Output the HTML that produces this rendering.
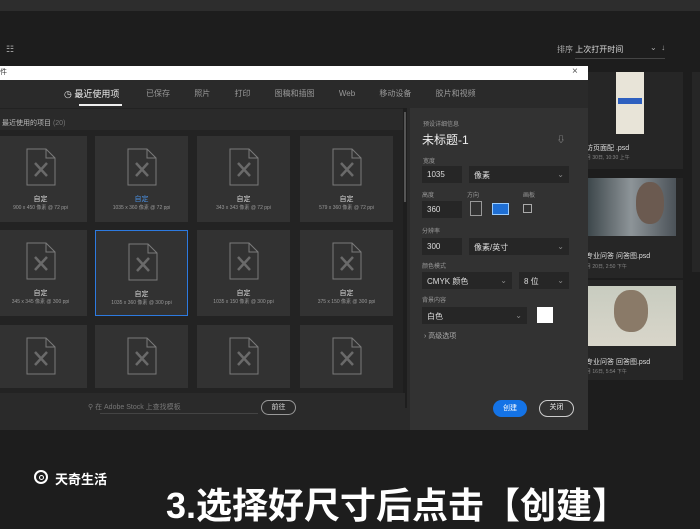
<!DOCTYPE html>
<html><head><meta charset="utf-8"><style>
*{margin:0;padding:0;box-sizing:border-box}
body{width:700px;height:525px;background:#1d1d1d;position:relative;overflow:hidden;font-family:"Liberation Sans","Noto Sans CJK SC",sans-serif;color:#ccc}
.a{position:absolute}
.card{position:absolute;background:#323232;width:93px;height:86px}
.card .ic{position:absolute;left:32px;top:12px;width:30px;height:38px}
.card .t1{position:absolute;top:58px;width:100%;text-align:center;font-size:7px;color:#ddd}
.card .t2{position:absolute;top:68px;width:100%;text-align:center;font-size:5px;color:#999}
.lbl{font-size:6px;color:#999}
.inp{background:#262626;height:17px;font-size:8px;color:#ddd;padding:4px 5px}
</style></head><body>
<div class="a" style="left:0;top:0;width:700px;height:11px;background:#2d2d2d"></div>
<div class="a" style="left:6px;top:44px;font-size:9px;color:#aaa">☷</div>
<div class="a" style="left:557px;top:44px;font-size:8px;color:#aaa">排序 <span style="color:#ddd">上次打开时间</span></div>
<div class="a" style="left:650px;top:43px;font-size:8px;color:#aaa">⌄ &nbsp;↓</div>
<div class="a" style="left:575px;top:58px;width:90px;height:1px;background:#444"></div>
<div class="a" style="left:588px;top:72px;width:95px;height:97px;background:#262626"></div>
<div class="a" style="left:616px;top:72px;width:28px;height:62px;background:#e8e4d8"></div>
<div class="a" style="left:618px;top:98px;width:24px;height:6px;background:#2d5fbf"></div>
<div class="a" style="left:586px;top:143px;font-size:7px;color:#ddd">访页面配 .psd</div>
<div class="a" style="left:586px;top:154px;font-size:5px;color:#888">月 30日, 10:30 上午</div>
<div class="a" style="left:588px;top:178px;width:95px;height:100px;background:#262626"></div>
<div class="a" style="left:586px;top:178px;width:90px;height:58px;background:linear-gradient(90deg,#3a4448,#8d9498 50%,#4b5258)"></div>
<div class="a" style="left:636px;top:182px;width:28px;height:42px;border-radius:45%;background:#6b5a50"></div>
<div class="a" style="left:586px;top:251px;font-size:7px;color:#ddd">专业问答 问答图.psd</div>
<div class="a" style="left:586px;top:263px;font-size:5px;color:#888">月 20日, 2:50 下午</div>
<div class="a" style="left:588px;top:280px;width:95px;height:100px;background:#262626"></div>
<div class="a" style="left:586px;top:286px;width:90px;height:60px;background:linear-gradient(180deg,#c8ccc0,#d9d6ca)"></div>
<div class="a" style="left:614px;top:290px;width:34px;height:42px;border-radius:45%;background:#8a7a68"></div>
<div class="a" style="left:586px;top:357px;font-size:7px;color:#ddd">专业问答 回答图.psd</div>
<div class="a" style="left:586px;top:368px;font-size:5px;color:#888">月 16日, 5:54 下午</div>
<div class="a" style="left:692px;top:72px;width:8px;height:200px;background:#262626"></div>
<div class="a" style="left:0;top:66px;width:588px;height:14px;background:#fff"></div>
<div class="a" style="left:0;top:67px;font-size:7px;color:#333">件</div>
<div class="a" style="left:572px;top:66px;font-size:10px;color:#555">×</div>
<div class="a" style="left:0;top:80px;width:588px;height:350px;background:#2a2a2a"></div>
<div class="a" style="left:64px;top:87px;font-size:9px;color:#eee">◷ 最近使用项</div>
<div class="a" style="left:79px;top:104px;width:43px;height:2px;background:#eee"></div>
<div class="a" style="left:146px;top:88px;font-size:8px;color:#999;word-spacing:22px">已保存 照片 打印 图稿和插图 Web 移动设备 胶片和视频</div>
<div class="a" style="left:0;top:108px;width:405px;height:1px;background:#222"></div>
<div class="a" style="left:2px;top:118px;font-size:7px;color:#bbb">最近使用的项目 <span style="color:#777">(20)</span></div>
<div class="a" style="left:0;top:130px;width:405px;height:265px;background:#232323"></div>
<div class="a" style="left:403px;top:108px;width:4px;height:300px;background:#1e1e1e"></div>
<div class="a" style="left:404px;top:112px;width:2px;height:90px;background:#555"></div>
<div id="g"></div>
<div class="a" style="left:0;top:393px;width:405px;height:30px;background:#2a2a2a"></div>
<div class="a" style="left:88px;top:402px;font-size:7px;color:#777">⚲ 在 Adobe Stock 上查找模板</div>
<div class="a" style="left:100px;top:413px;width:158px;height:1px;background:#444"></div>
<div class="a" style="left:261px;top:400px;width:35px;height:15px;border:1px solid #999;border-radius:8px;font-size:7px;color:#ddd;text-align:center;line-height:13px">前往</div>
<div class="a" style="left:410px;top:108px;width:178px;height:322px;background:#323232"></div>
<div class="a lbl" style="left:423px;top:119px">预设详细信息</div>
<div class="a" style="left:422px;top:131px;font-size:12px;color:#eee">未标题-1</div>
<div class="a" style="left:557px;top:134px;font-size:8px;color:#aaa">⇩</div>
<div class="a lbl" style="left:423px;top:156px">宽度</div>
<div class="a inp" style="left:422px;top:166px;width:40px">1035</div>
<div class="a inp" style="left:469px;top:166px;width:100px">像素 <span style="float:right;color:#888">⌄</span></div>
<div class="a lbl" style="left:422px;top:190px">高度</div>
<div class="a lbl" style="left:467px;top:190px">方向</div>
<div class="a lbl" style="left:523px;top:190px">画板</div>
<div class="a inp" style="left:422px;top:201px;width:40px">360</div>
<div class="a" style="left:470px;top:201px;width:12px;height:15px;border:1px solid #999"></div>
<div class="a" style="left:492px;top:203px;width:17px;height:12px;background:#1f6fd4;border:1px solid #9cf"></div>
<div class="a" style="left:523px;top:204px;width:9px;height:9px;border:1px solid #aaa"></div>
<div class="a lbl" style="left:422px;top:226px">分辨率</div>
<div class="a inp" style="left:422px;top:238px;width:40px">300</div>
<div class="a inp" style="left:469px;top:238px;width:100px">像素/英寸 <span style="float:right;color:#888">⌄</span></div>
<div class="a lbl" style="left:422px;top:261px">颜色模式</div>
<div class="a inp" style="left:422px;top:272px;width:90px">CMYK 颜色 <span style="float:right;color:#888">⌄</span></div>
<div class="a inp" style="left:519px;top:272px;width:50px">8 位 <span style="float:right;color:#888">⌄</span></div>
<div class="a lbl" style="left:422px;top:295px">背景内容</div>
<div class="a inp" style="left:422px;top:307px;width:105px">白色 <span style="float:right;color:#888">⌄</span></div>
<div class="a" style="left:537px;top:307px;width:16px;height:16px;background:#fff"></div>
<div class="a" style="left:424px;top:331px;font-size:7px;color:#aaa">› 高级选项</div>
<div class="a" style="left:493px;top:400px;width:34px;height:17px;border-radius:9px;background:#1473e6;font-size:7px;color:#fff;text-align:center;line-height:17px">创建</div>
<div class="a" style="left:539px;top:400px;width:35px;height:17px;border-radius:9px;border:1.5px solid #ccc;font-size:7px;color:#eee;text-align:center;line-height:14px">关闭</div>
<div class="a" style="left:34px;top:470px;width:14px;height:14px;border-radius:50%;border:2.5px solid #fff"></div>
<div class="a" style="left:39px;top:475px;width:5px;height:5px;border-radius:50%;border:1.5px solid #fff"></div>
<div class="a" style="left:55px;top:469px;font-size:13px;font-weight:bold;color:#fff">天奇生活</div>
<div class="a" style="left:166px;top:477px;font-size:36px;font-weight:bold;color:#fff;white-space:nowrap">3.选择好尺寸后点击【创建】</div>
<script>
var xs=[-6,95,197,300],ys=[136,230,325];
var t=[["900 x 450 像素 @ 72 ppi","1035 x 360 像素 @ 72 ppi","343 x 343 像素 @ 72 ppi","579 x 360 像素 @ 72 ppi"],["345 x 345 像素 @ 300 ppi","1035 x 360 像素 @ 300 ppi","1035 x 150 像素 @ 300 ppi","375 x 150 像素 @ 300 ppi"]];
var ic='<svg class="ic" viewBox="0 0 30 38"><path d="M1 1H20L29 10V37H1Z M20 1V10H29" fill="none" stroke="#7a7a7a" stroke-width="1"/><path d="M9 15L21 28M21 15L9 28" stroke="#6a6a6a" stroke-width="2.5"/></svg>';
var h='';
for(var r=0;r<3;r++)for(var c=0;c<4;c++){
var s='left:'+xs[c]+'px;top:'+ys[r]+'px;'+(r==2?'height:63px;':'');
if(r==1&&c==1)s+='border:1.5px solid #2d7ae0;';
h+='<div class="card" style="'+s+'">'+ic+(r<2?'<div class="t1"'+(r==0&&c==1?' style="color:#4a90e2"':'')+'>自定</div><div class="t2">'+t[r][c]+'</div>':'')+'</div>';}
document.getElementById('g').innerHTML=h;
</script>
</body></html>
